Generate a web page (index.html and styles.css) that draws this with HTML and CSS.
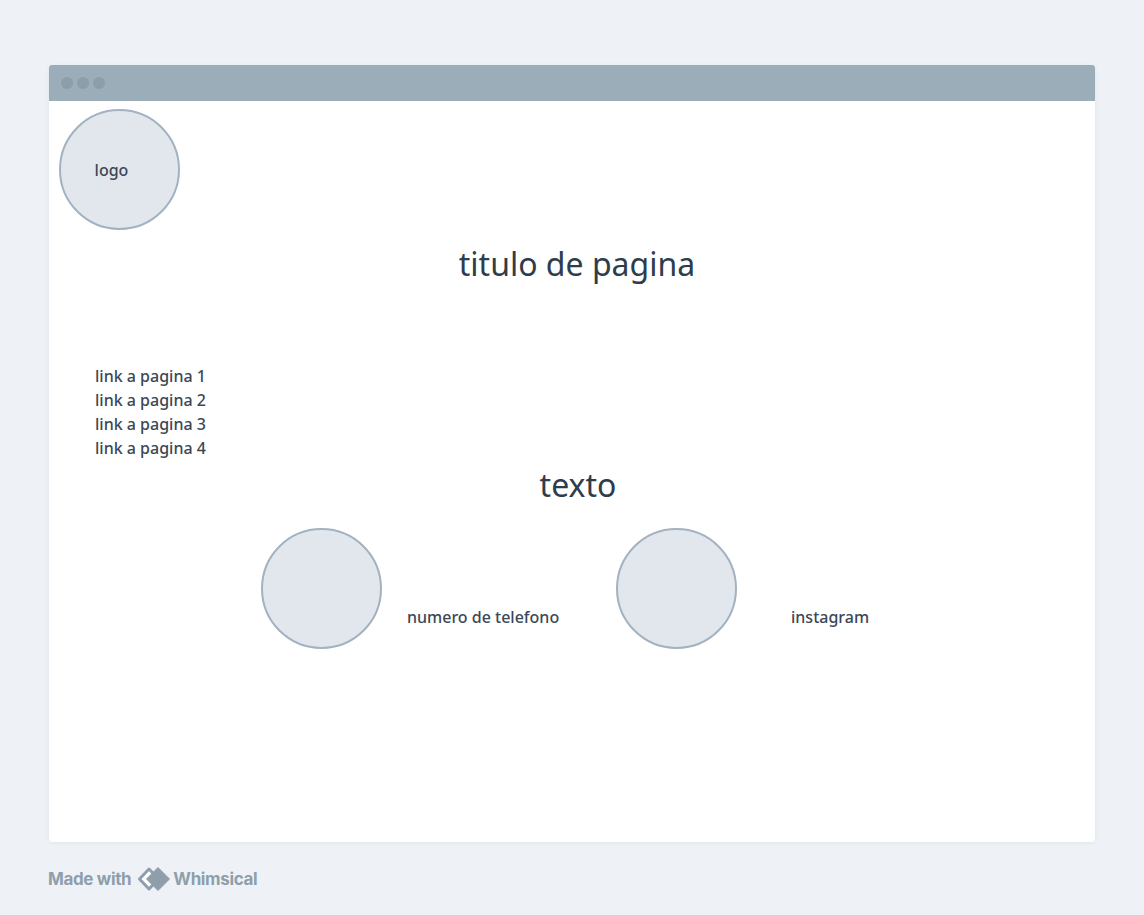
FILE: index.html
```html
<!DOCTYPE html>
<html>
<head>
<meta charset="utf-8">
<link rel="stylesheet" href="styles.css">
</head>
<body>
<div class="page">
  <div class="window">
    <div class="titlebar">
      <span class="dot"></span><span class="dot"></span><span class="dot"></span>
    </div>
    <div class="canvas">
      <div class="circle logo"><span>logo</span></div>
      <h1 class="title">titulo de pagina</h1>
      <ul class="links">
        <li>link a pagina 1</li>
        <li>link a pagina 2</li>
        <li>link a pagina 3</li>
        <li>link a pagina 4</li>
      </ul>
      <h2 class="texto">texto</h2>
      <div class="circle c-phone"></div>
      <div class="label l-phone">numero de telefono</div>
      <div class="circle c-insta"></div>
      <div class="label l-insta">instagram</div>
    </div>
  </div>
  <div class="footer">
    <span>Made with</span>
    <svg class="wlogo" width="34" height="26" viewBox="0 0 34 26">
      <path d="M12 3 L2.5 13 L12 23 L21.5 13 Z" fill="#ffffff" stroke="#8f9eab" stroke-width="3" stroke-linejoin="round"/>
      <path d="M21 1.5 L32.5 13 L21 24.5 L9.5 13 Z" fill="#8f9eab" stroke="#8f9eab" stroke-width="1" stroke-linejoin="round"/>
    </svg>
    <span>Whimsical</span>
  </div>
</div>
</body>
</html>
```

FILE: styles.css
```css
html, body {
  margin: 0;
  padding: 0;
  background: #eef2f6;
}
body {
  font-family: "Noto Sans", "DejaVu Sans", sans-serif;
  color: #2f3e4d;
}
.page {
  width: 1144px;
  height: 915px;
  padding: 65px 49px 0 49px;
  box-sizing: border-box;
}
.window {
  width: 1046px;
  background: #ffffff;
  border-radius: 3px;
  box-shadow: 0 1px 4px rgba(40, 60, 80, 0.08);
  overflow: hidden;
}
.titlebar {
  height: 36px;
  background: #9cadba;
  display: flex;
  align-items: center;
  gap: 4px;
  padding-left: 12px;
}
.dot {
  width: 12px;
  height: 12px;
  border-radius: 50%;
  background: #8c9dab;
}
.canvas {
  position: relative;
  height: 741px;
}
.circle {
  position: absolute;
  width: 117px;
  height: 117px;
  border: 2px solid #a3b2c1;
  background: #e2e7ed;
  border-radius: 50%;
  display: flex;
  align-items: center;
  justify-content: center;
}
.logo {
  left: 10px;
  top: 8px;
}
.logo span {
  font-size: 16px;
  font-weight: 500;
  color: #3b4856;
  margin-right: 16px;
}
.title {
  position: absolute;
  left: 10px;
  right: 0;
  top: 141px;
  margin: 0;
  text-align: center;
  font-size: 32px;
  font-weight: 400;
  line-height: 44px;
  color: #2e3d4c;
}
.links {
  position: absolute;
  left: 46px;
  top: 263px;
  margin: 0;
  padding: 0;
  list-style: none;
  font-size: 16px;
  line-height: 24px;
  font-weight: 500;
  color: #3b4856;
}
.texto {
  position: absolute;
  left: 12px;
  right: 0;
  top: 362px;
  margin: 0;
  text-align: center;
  font-size: 32px;
  font-weight: 400;
  line-height: 44px;
  color: #2e3d4c;
}
.c-phone {
  left: 212px;
  top: 427px;
}
.c-insta {
  left: 567px;
  top: 427px;
}
.label {
  position: absolute;
  font-size: 16px;
  font-weight: 500;
  line-height: 24px;
  color: #3b4856;
  top: 504px;
}
.l-phone {
  left: 358px;
}
.l-insta {
  left: 742px;
}
.footer {
  display: flex;
  align-items: center;
  gap: 6px;
  margin-top: 24px;
  margin-left: -1px;
  font-family: "Inter", "Liberation Sans", sans-serif;
  font-weight: 700;
  font-size: 17px;
  color: #8f9eab;
  letter-spacing: -0.35px;
}
.wlogo {
  display: block;
  margin-left: 0;
  margin-right: -4px;
}
```
